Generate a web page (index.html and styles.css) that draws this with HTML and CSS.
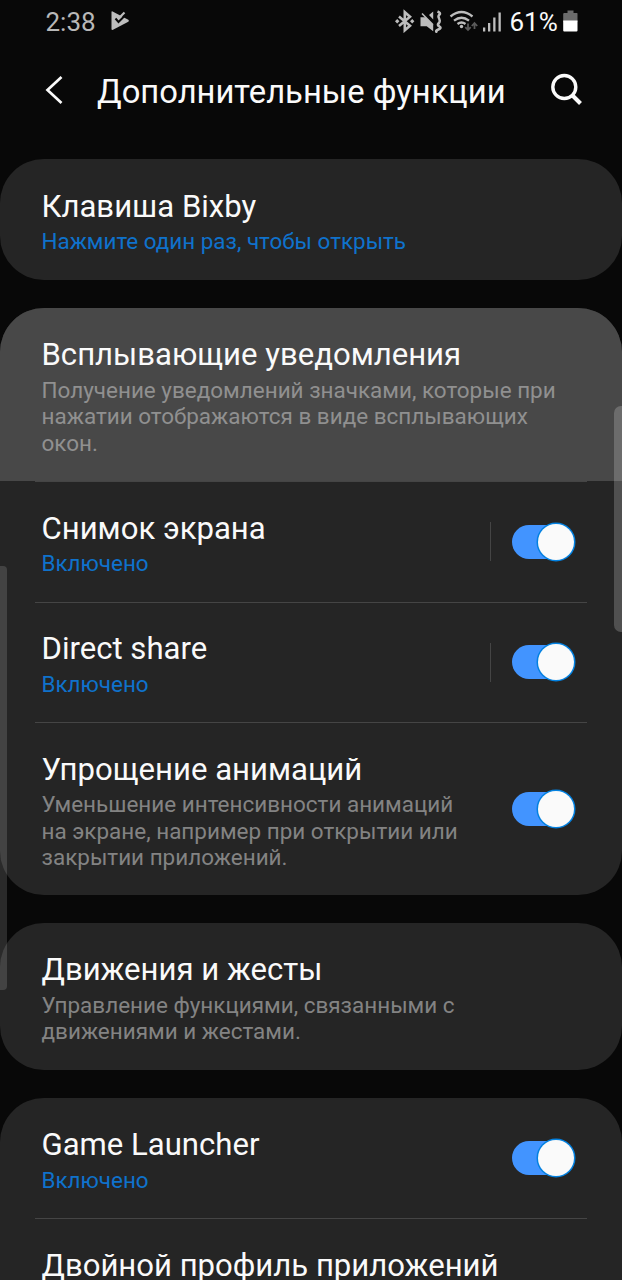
FILE: index.html
```html
<!DOCTYPE html>
<html lang="ru">
<head>
<meta charset="utf-8">
<title>Дополнительные функции</title>
<link rel="stylesheet" href="styles.css">
</head>
<body>
<div class="screen">
  <div class="status">
    <span class="clock">2:38</span>
    <svg class="play" width="20" height="20" viewBox="0 0 20 20"><path fill="#bdbdbd" d="M1.500 1Q1.500 0 2.600.5L18.300 8.800Q19.600 9.800 18.300 10.800L3 18.800Q1.500 19.200 1.500 18Z"/><path fill="none" stroke="#080808" stroke-width="2" d="M5.500 7.500l3 3.500 8-8"/><path fill="none" stroke="#bdbdbd" stroke-width="2.200" d="M9.500 6.500L14.500 1.500"/></svg>
    <svg class="sysicons" width="112" height="24" viewBox="0 0 112 24">
      <path d="M5 7.500l11 9.200-5.200 4.600V3.200L16 7.800l-11 9.200" fill="none" stroke="#bdbdbd" stroke-width="2.600"/>
      <path fill="#bdbdbd" d="M1 12.200l2.200-2.200 2.200 2.200-2.200 2.200zM16 12.200l2.200-2.200 2.200 2.200-2.200 2.200z"/>
      <path fill="#bdbdbd" d="M26.500 8.200h5.200l7.500 7.500v6.500l-6.500-5H26.500zM39.200 2.500v8l-4.200-4.400z"/>
      <path d="M28 4.500l11 11.200" stroke="#bdbdbd" stroke-width="1.600"/>
      <path d="M43.500 2.500q3.500 1.500 2 3t-.8 3 1 3-1.200 3 1 3-1.200 3-1 3" fill="none" stroke="#bdbdbd" stroke-width="2.500"/>
      <g fill="none" stroke="#bdbdbd" stroke-width="2.300"><path d="M56.500 7.500q11-9 22 0M60 11.700q7.500-6 15 0M63.500 15q4-3 8 0"/></g><circle cx="67.500" cy="17.500" r="1.700" fill="#bdbdbd"/>
      <path d="M74 14.500v6.500m-2.700-2.800l2.700 2.800 2.700-2.800M80.500 20v-6m-2.700 3l2.700-3 2.700 3" fill="none" stroke="#5a5a5a" stroke-width="1.800"/>
      <path fill="#bdbdbd" d="M89 18.500h2.300v4H89zM94 14h2.300v8.500H94zM99.200 8.500h2.300v14h-2.300zM104.500 3.500h2.300v19h-2.300z"/>
    </svg>
    <span class="percent">61%</span>
    <svg class="battery" width="15" height="22" viewBox="0 0 15 22"><path fill="#6b6b6b" d="M4.500.5h6V3H14q.5 0 .5 1v8H.2V4q0-1 1-1h3.300z"/><path fill="#fff" d="M.2 10.500H14.500V20.500q0 1-1 1H1.200q-1 0-1-1z"/></svg>
  </div>
  <header class="appbar">
    <svg class="back" width="20" height="30" viewBox="0 0 20 30"><path d="M17.500 2L3.500 15l14 13" fill="none" stroke="#fafafa" stroke-width="2.700"/></svg>
    <h1 class="heading">Дополнительные функции</h1>
    <svg class="search" width="34" height="34" viewBox="0 0 34 34"><circle cx="14.300" cy="14" r="11.500" fill="none" stroke="#fafafa" stroke-width="3.400"/><path d="M22.500 22.500l8 8" stroke="#fafafa" stroke-width="4"/></svg>
  </header>
  <main class="list">
    <section class="card">
      <div class="row"><div class="copy"><div class="title">Клавиша Bixby</div><div class="sub link">Нажмите один раз, чтобы открыть</div></div></div>
    </section>
    <section class="card">
      <div class="row pressed"><div class="copy"><div class="title">Всплывающие уведомления</div><div class="sub">Получение уведомлений значками, которые при<br>нажатии отображаются в виде всплывающих<br>окон.</div></div></div>
      <div class="row"><div class="copy"><div class="title">Снимок экрана</div><div class="sub link">Включено</div></div><i class="split"></i><span class="toggle"></span></div>
      <div class="row"><div class="copy"><div class="title">Direct share</div><div class="sub link">Включено</div></div><i class="split"></i><span class="toggle"></span></div>
      <div class="row tall"><div class="copy"><div class="title">Упрощение анимаций</div><div class="sub">Уменьшение интенсивности анимаций<br>на экране, например при открытии или<br>закрытии приложений.</div></div><span class="toggle"></span></div>
    </section>
    <section class="card">
      <div class="row medium"><div class="copy"><div class="title">Движения и жесты</div><div class="sub">Управление функциями, связанными с<br>движениями и жестами.</div></div></div>
    </section>
    <section class="card">
      <div class="row"><div class="copy"><div class="title">Game Launcher</div><div class="sub link">Включено</div></div><span class="toggle"></span></div>
      <div class="row"><div class="copy"><div class="title">Двойной профиль приложений</div></div></div>
    </section>
  </main>
  <div class="edge edge-left"></div>
  <div class="edge edge-right"></div>
</div>
</body>
</html>
```
FILE: styles.css
```css
* { box-sizing: border-box; }
body { margin: 0; background: #080808; font-family: Roboto, sans-serif; color: #fafafa; }
.screen { position: relative; width: 622px; height: 1280px; overflow: hidden; }
.status { height: 44px; padding: 0 44px 0 45.5px; display: flex; align-items: center; }
.clock { font-size: 26px; color: #b8b8b8; width: 64px; }
.play { margin-top: -2px; }
.sysicons { margin: -3px 4px 0 auto; }
.percent { font-size: 26px; width: 51.5px; white-space: nowrap; }
.battery { margin: -2px 0 0 2px; }
.appbar { height: 115px; padding: 0 38px 23px 44px; display: flex; align-items: center; }
.back { flex: none; }
.heading { margin: 3px 0 0 33px; font-size: 32.75px; font-weight: 400; line-height: 40px; white-space: nowrap; flex: 1; }
.search { flex: none; }
.list { display: flex; flex-direction: column; gap: 28px; }
.card { background: #252525; border-radius: 44px; overflow: hidden; flex: none; }
.row { position: relative; height: 120.5px; padding: 27.5px 46px 0 41.5px; display: flex; }
.row + .row::before { content: ""; position: absolute; top: 0; left: 35px; right: 35px; height: 1px; background: #454545; }
.pressed { height: 173.5px; background: #484848; }
.tall { height: 172.5px; }
.medium { height: 147px; }
.copy { flex: 1; }
.title { font-size: 31.1px; line-height: 40px; white-space: nowrap; }
.sub { margin-top: 1.5px; font-size: 22.47px; line-height: 26.5px; color: #838383; white-space: nowrap; }
.pressed .sub { color: #909090; }
.sub.link { color: #0f72cc; font-size: 22.43px; }
.split { width: 1px; height: 39px; margin: -27px 21px 0 0; align-self: center; background: #454545; }
.toggle { position: relative; width: 64px; height: 34px; margin: -27px 0 0; align-self: center; flex: none; }
.toggle::before { content: ""; position: absolute; inset: 0 2px 0 0; border-radius: 17px; background: #4294ff; }
.toggle::after { content: ""; position: absolute; top: -1px; right: 2px; width: 36px; height: 36px; border-radius: 50%; box-shadow: 0 0 0 1.5px #0381e0; background: #fafafa; }
.edge { position: absolute; background: rgba(255, 255, 255, .2); }
.edge-left { left: 0; top: 566px; width: 7px; height: 424px; border-radius: 0 4px 4px 0; background: rgba(255, 255, 255, .14); }
.edge-right { right: 0; top: 406px; width: 8px; height: 226px; border-radius: 7px 0 0 7px; }
```
